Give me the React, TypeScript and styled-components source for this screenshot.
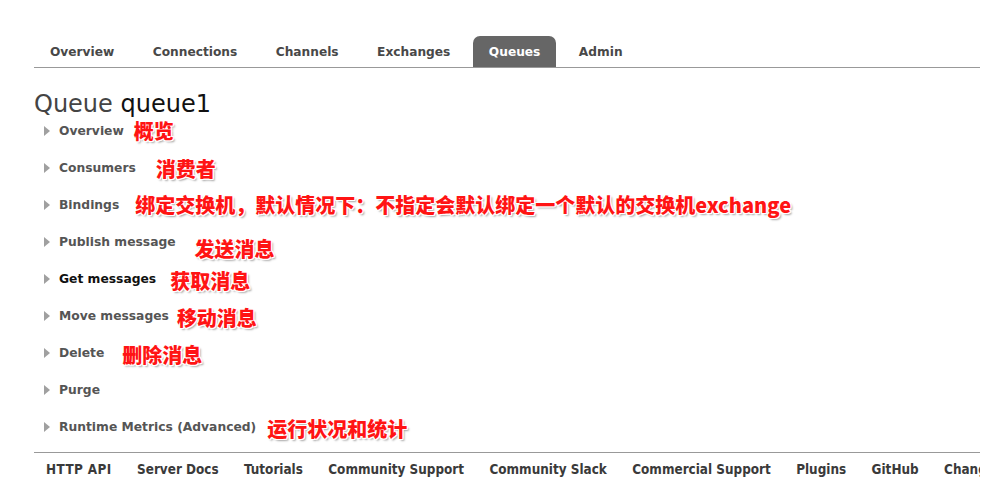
import * as React from 'react';
import styled, { createGlobalStyle } from 'styled-components';

const GlobalStyle = createGlobalStyle`
  html, body {
    margin: 0;
    padding: 0;
    background: #fff;
  }
  body {
    font-family: "DejaVu Sans", Verdana, sans-serif;
    color: #444;
  }
`;

const Page = styled.div`
  width: 946px;
  padding: 36px 0 0 34px;
  overflow: hidden;
`;

const TabBar = styled.ul`
  display: flex;
  gap: 6.5px;
  margin: 0;
  padding: 0;
  list-style: none;
  border-bottom: 1px solid #999;
`;

const Tab = styled.li<{ $active?: boolean }>`
  box-sizing: border-box;
  height: 31px;
  padding: 2px 16px 0;
  line-height: 29px;
  border-radius: 7px 7px 0 0;
  font-size: 12.2px;
  font-weight: bold;
  color: ${(p) => (p.$active ? '#fff' : '#484848')};
  background: ${(p) => (p.$active ? '#666' : 'transparent')};
  white-space: nowrap;
`;

const Heading = styled.h1`
  margin: 26px 0 0;
  font-size: 24px;
  line-height: 20px;
  font-weight: normal;
  color: #444;
`;

const Name = styled.span`
  color: #111;
`;

const Sections = styled.div`
  margin-top: -2px;
  padding-left: 10px;
`;

const Row = styled.div`
  display: flex;
  align-items: center;
  height: 37px;
`;

const Arrow = styled.span`
  width: 0;
  height: 0;
  border-top: 5px solid transparent;
  border-bottom: 5px solid transparent;
  border-left: 6px solid #a0a0a0;
  margin-right: 9px;
`;

const Label = styled.span<{ $strong?: boolean }>`
  font-size: 12.3px;
  font-weight: bold;
  color: ${(p) => (p.$strong ? '#111' : '#555')};
  white-space: nowrap;
`;

const Note = styled.span<{ $gap: number; $drop: number }>`
  margin-left: ${(p) => p.$gap}px;
  transform: translateY(${(p) => p.$drop}px);
  font-family: "Noto Sans CJK SC", "Noto Sans", sans-serif;
  font-size: 20px;
  font-weight: 900;
  line-height: 24px;
  color: #ff1414;
  white-space: nowrap;
  text-shadow:
    1px 0 0 #fff, -1px 0 0 #fff, 0 1px 0 #fff, 0 -1px 0 #fff,
    1px 1px 0 #fff, -1px -1px 0 #fff, 1px -1px 0 #fff, -1px 1px 0 #fff,
    2px 2px 2px rgba(0, 0, 0, 0.35);
`;

const Footer = styled.ul`
  display: flex;
  gap: 25.4px;
  margin: 7px 0 0;
  padding: 9px 0 0 12px;
  list-style: none;
  border-top: 1px solid #999;
`;

const FooterLink = styled.li<{ $wide?: boolean }>`
  font-family: "DejaVu Sans Condensed", "DejaVu Sans", sans-serif;
  font-size: 13.4px;
  font-weight: bold;
  line-height: 15px;
  letter-spacing: ${(p) => (p.$wide ? '0.4px' : '0')};
  color: #3a3a3a;
  white-space: nowrap;
`;

type Section = {
  label: string;
  strong?: boolean;
  note?: string;
  gap?: number;
  drop?: number;
};

const tabs = ['Overview', 'Connections', 'Channels', 'Exchanges', 'Queues', 'Admin'];

const sections: Section[] = [
  { label: 'Overview', note: '概览', gap: 10 },
  { label: 'Consumers', note: '消费者', gap: 20, drop: 1 },
  {
    label: 'Bindings',
    note: '绑定交换机，默认情况下：不指定会默认绑定一个默认的交换机exchange',
    gap: 16,
  },
  { label: 'Publish message', note: '发送消息', gap: 19, drop: 7 },
  { label: 'Get messages', strong: true, note: '获取消息', gap: 14, drop: 2 },
  { label: 'Move messages', note: '移动消息', gap: 8, drop: 2 },
  { label: 'Delete', note: '删除消息', gap: 18, drop: 2 },
  { label: 'Purge' },
  { label: 'Runtime Metrics (Advanced)', note: '运行状况和统计', gap: 11, drop: 2 },
];

const links = [
  'HTTP API',
  'Server Docs',
  'Tutorials',
  'Community Support',
  'Community Slack',
  'Commercial Support',
  'Plugins',
  'GitHub',
  'Changelog',
];

const App = () => (
  <Page>
    <GlobalStyle />
    <TabBar>
      {tabs.map((t) => (
        <Tab key={t} $active={t === 'Queues'}>
          {t}
        </Tab>
      ))}
    </TabBar>
    <Heading>
      Queue <Name>queue1</Name>
    </Heading>
    <Sections>
      {sections.map((s) => (
        <Row key={s.label}>
          <Arrow />
          <Label $strong={s.strong}>{s.label}</Label>
          {s.note && (
            <Note $gap={s.gap ?? 10} $drop={s.drop ?? 0}>
              {s.note}
            </Note>
          )}
        </Row>
      ))}
    </Sections>
    <Footer>
      {links.map((l) => (
        <FooterLink key={l} $wide={l === 'HTTP API'}>
          {l}
        </FooterLink>
      ))}
    </Footer>
  </Page>
);

export default App;
